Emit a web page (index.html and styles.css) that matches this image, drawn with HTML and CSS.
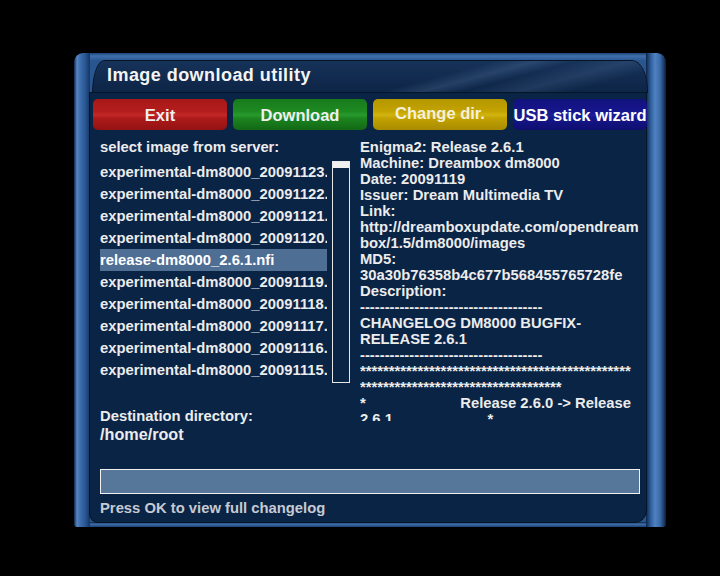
FILE: index.html
```html
<!DOCTYPE html>
<html>
<head>
<meta charset="utf-8">
<link rel="stylesheet" href="styles.css">
</head>
<body>
<div class="screen">
  <div class="frame">
    <div class="panel">
      <div class="titlebar"><span class="title">Image download utility</span></div>
      <div class="body">
        <div class="buttons">
          <div class="btn btn-red">Exit</div>
          <div class="btn btn-green">Download</div>
          <div class="btn btn-yellow">Change dir.</div>
          <div class="btn btn-blue">USB stick wizard</div>
        </div>
        <div class="main">
          <div class="left">
            <div class="label">select image from server:</div>
            <div class="listwrap">
              <ul class="list">
                <li>experimental-dm8000_20091123.nfi</li>
                <li>experimental-dm8000_20091122.nfi</li>
                <li>experimental-dm8000_20091121.nfi</li>
                <li>experimental-dm8000_20091120.nfi</li>
                <li class="selected">release-dm8000_2.6.1.nfi</li>
                <li>experimental-dm8000_20091119.nfi</li>
                <li>experimental-dm8000_20091118.nfi</li>
                <li>experimental-dm8000_20091117.nfi</li>
                <li>experimental-dm8000_20091116.nfi</li>
                <li>experimental-dm8000_20091115.nfi</li>
              </ul>
              <div class="scrollbar"><div class="thumb"></div></div>
            </div>
            <div class="dest-label">Destination directory:</div>
            <div class="dest-path">/home/root</div>
          </div>
          <div class="info">
            <div class="line">Enigma2: Release 2.6.1</div>
            <div class="line">Machine: Dreambox dm8000</div>
            <div class="line">Date: 20091119</div>
            <div class="line">Issuer: Dream Multimedia TV</div>
            <div class="line">Link:</div>
            <div class="line">http://dreamboxupdate.com/opendream</div>
            <div class="line">box/1.5/dm8000/images</div>
            <div class="line">MD5:</div>
            <div class="line">30a30b76358b4c677b568455765728fe</div>
            <div class="line">Description:</div>
            <div class="line">-------------------------------------</div>
            <div class="line">CHANGELOG DM8000 BUGFIX-</div>
            <div class="line">RELEASE 2.6.1</div>
            <div class="line">-------------------------------------</div>
            <div class="line">***********************************************</div>
            <div class="line">***********************************</div>
            <div class="line pre">*                       Release 2.6.0 -&gt; Release</div>
            <div class="line pre">2.6.1                       *</div>
          </div>
        </div>
        <div class="progress"></div>
        <div class="hint">Press OK to view full changelog</div>
      </div>
    </div>
  </div>
</div>
</body>
</html>
```

FILE: styles.css
```css
html, body {
  margin: 0;
  padding: 0;
  background: #000;
}

.screen {
  width: 720px;
  height: 576px;
  background: #000;
  padding: 53px 0 0 74px;
  box-sizing: border-box;
  font-family: "Liberation Sans", Arial, sans-serif;
  font-weight: bold;
  color: #ececec;
}

.frame {
  width: 592px;
  height: 474px;
  box-sizing: border-box;
  padding: 7px 20px 5px 16px;
  border-radius: 9px 9px 3px 3px;
  background:
    linear-gradient(to right, #0f2748 0, #5586c4 3px, #3e6eae 6px, #2a5894 11px, #153463 16px) left top / 16px 100% no-repeat,
    linear-gradient(to right, #0d2344 0, #2a5894 4px, #4f82c2 9px, #3a6aa8 14px, #1a3a68 18px, #0a1a34 20px) right top / 20px 100% no-repeat,
    linear-gradient(to bottom, #1d4274 0, #3f6fad 3px, #2c5a94 7px) left top / 100% 7px no-repeat,
    linear-gradient(to bottom, #0a1d38 0, #3f6fad 2px, #1d4274 5px) left bottom / 100% 5px no-repeat,
    #2a5690;
}

.panel {
  width: 556px;
  height: 462px;
  display: flex;
  flex-direction: column;
}

.titlebar {
  height: 33px;
  flex: none;
  margin: 0 -2px 0 2px;
  border-radius: 12px 16px 0 0 / 33px 30px 0 0;
  box-shadow: inset 0 0 0 1px #061428;
  background:
    linear-gradient(165deg, transparent 60%, rgba(130, 170, 215, 0.18) 66%, transparent 72%, rgba(130, 170, 215, 0.14) 80%, transparent 88%),
    linear-gradient(to bottom, #17335a 0, #112a4e 55%, #0d2546 100%);
  box-sizing: border-box;
  padding-left: 15px;
}

.title {
  display: block;
  font-size: 18px;
  line-height: 30px;
  letter-spacing: 0.45px;
  color: #f4f4f4;
}

.body {
  flex: 1;
  background: #0a2446;
  border-radius: 0 0 12px 8px;
  box-shadow: 0 0 0 1px #061428;
  display: flex;
  flex-direction: column;
}

.buttons {
  display: flex;
  gap: 6px;
  margin: 6px -1px 0 3px;
}

.btn {
  width: 134px;
  height: 31px;
  flex: none;
  border-radius: 5px;
  text-align: center;
  font-size: 16.5px;
  line-height: 32px;
  color: #f0f0f0;
}

.btn-red {
  background: linear-gradient(to bottom, #a81818 0, #b41d1d 40%, #c42828 52%, #ac1a1a 62%, #941212 100%);
}

.btn-green {
  background: linear-gradient(to bottom, #187a1c 0, #1e8a22 40%, #289a2c 52%, #1c8420 62%, #126814 100%);
}

.btn-yellow {
  background: linear-gradient(to bottom, #b49600 0, #c4a400 40%, #d2b410 52%, #c2a200 62%, #a88a00 100%);
  line-height: 28px;
  color: #f4f0dc;
}

.btn-blue {
  background: linear-gradient(to bottom, #12127e 0, #16168c 40%, #1e1e9c 52%, #16168a 62%, #0e0e70 100%);
  color: #ffffff;
}

.main {
  display: flex;
  margin: 9px 0 0 10px;
  height: 305px;
  flex: none;
}

.left {
  width: 250px;
  flex: none;
}

.label {
  height: 22px;
  font-size: 14.8px;
  line-height: 17px;
}

.listwrap {
  display: flex;
  gap: 5px;
  align-items: flex-start;
}

.list {
  list-style: none;
  margin: 0;
  padding: 0;
  width: 227px;
  overflow: hidden;
}

.list li {
  height: 22px;
  font-size: 14.8px;
  line-height: 23px;
  white-space: nowrap;
  overflow: hidden;
}

.list li.selected {
  background: #4e6e94;
  color: #ffffff;
}

.scrollbar {
  width: 18px;
  height: 222px;
  box-sizing: border-box;
  border: 1px solid #e8e8e8;
  flex: none;
}

.thumb {
  height: 6px;
  background: #f0f0f0;
}

.dest-label {
  margin-top: 25px;
  font-size: 14.8px;
  line-height: 16px;
}

.dest-path {
  font-size: 16.2px;
  line-height: 20px;
}

.info {
  margin-left: 10px;
  width: 282px;
  height: 282px;
  overflow: hidden;
}

.line {
  font-size: 14.8px;
  line-height: 16px;
  white-space: nowrap;
}

.line.pre {
  white-space: pre;
}

.progress {
  margin: 25px 0 0 10px;
  width: 540px;
  height: 25px;
  box-sizing: border-box;
  border: 1px solid #f0f0f0;
  background: #57779a;
}

.hint {
  margin: 6px 0 0 10px;
  font-size: 14.8px;
  line-height: 16px;
  color: #c6cad2;
}
```
